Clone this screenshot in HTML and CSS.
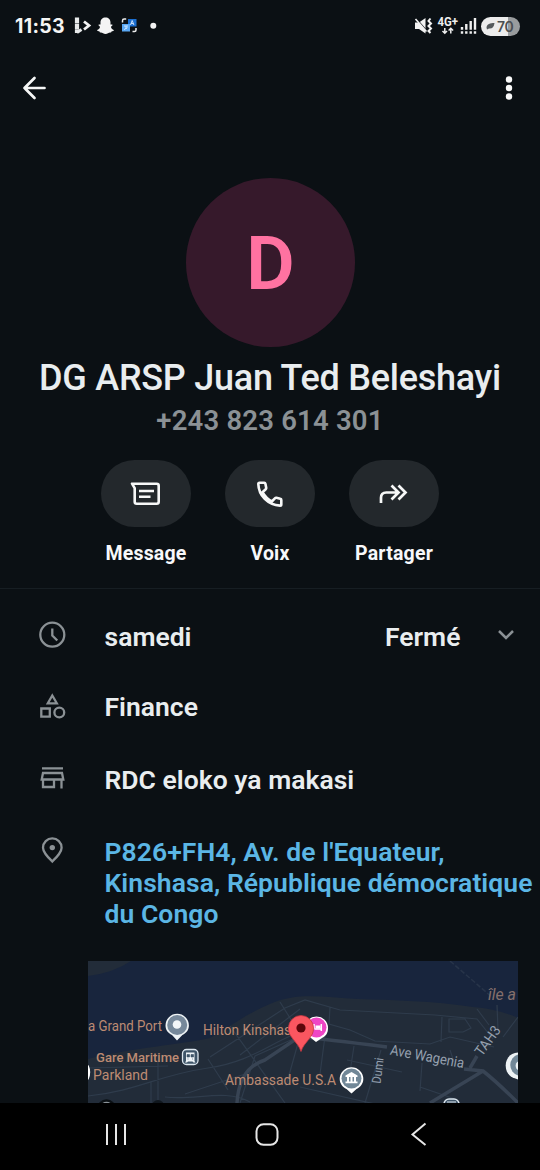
FILE: index.html
```
<!DOCTYPE html>
<html lang="fr">
<head>
<meta charset="utf-8">
<title>Profil professionnel</title>
<link rel="stylesheet" href="styles.css">
</head>
<body>
<div class="screen">
  <header class="status">
    <span class="clock">11:53</span>
    <svg class="status-left" width="84" height="22" viewBox="73 15 84 22">
      <path d="M77 17.500v15.500" stroke="#e8eaeb" stroke-width="4.200" stroke-dasharray="5.500 .4"/>
      <path d="M77 32.500l4.500-3" stroke="#e8eaeb" stroke-width="3"/>
      <path d="M84 21.500l5 4-5 4" fill="none" stroke="#f2f2f2" stroke-width="2.800"/>
      <path d="M105.500 17.500c3 0 5 2 5 5v2c1 0 1.800-.3 2 .4.200.8-1.600 1.200-1.500 2 .3 1.700 1.800 2.600 3 3.100.2.900-1.700 1.200-2.500 1.400-.4.800-.4 1.200-1.300 1.200-1.500-.1-2.700 1.500-4.700 1.500s-3.200-1.600-4.700-1.500c-.9 0-.9-.4-1.300-1.200-.8-.2-2.700-.5-2.500-1.400 1.200-.5 2.700-1.400 3-3.100.1-.8-1.700-1.200-1.500-2 .2-.7 1-.4 2-.4v-2c0-3 2-5 5-5z" fill="#f4f4f4"/>
      <path d="M128 19h8.500v7.500H128z" fill="#1c6fd0"/>
      <path d="M122 24h8v7.500h-8z" fill="#5aa8f4"/>
      <path d="M122.500 22.500v-1.800q0-1.700 1.700-1.700h2M136 28v2q0 1.500-1.500 1.500h-2" fill="none" stroke="#eee" stroke-width="1.500"/>
      <path d="M130.500 25l1.700-4.500 1.700 4.500m-2.800-1.500h2.200M124 26h4m-2 0v3m-2 .6l3.500-2" fill="none" stroke="#d9ebff" stroke-width=".9"/>
      <circle cx="153.300" cy="25.700" r="3" fill="#f3f3f3"/>
    </svg>
    <svg class="status-right" width="64" height="22" viewBox="414 15 64 22">
      <path d="M415 22.500h4l6.500-4.500v15.500l-6.500-4.500h-4z" fill="#f2f2f2"/>
      <path d="M416.500 19l9.500 11" stroke="#0b1014" stroke-width="1.200"/>
      <path d="M415.500 19l11 12.500" stroke="#f2f2f2" stroke-width="1.600"/>
      <path d="M430.500 18.500l-2 2.500 2.500 2.500-2.500 2.500 2.500 2.500-2.500 2.500 2 2" fill="none" stroke="#f2f2f2" stroke-width="2"/>
      <text class="net" x="437.500" y="25.500" textLength="20.500" lengthAdjust="spacingAndGlyphs">4G+</text>
      <path d="M444.800 28v5M442.500 31l2.300 2.300L447 31M450.800 33.500v-5M448.600 30.500l2.200-2.200 2.300 2.200" fill="none" stroke="#eee" stroke-width="1.500"/>
      <path d="M462 27v2.700M466.300 24v5.700M470.700 21v8.700M475 18v11.700M462 31.200v2.600M466.300 31.200v2.600M470.700 31.200v2.600M475 31.200v2.600" stroke="#f0f0f0" stroke-width="2.400"/>
    </svg>
    <div class="battery">
      <svg width="9" height="8" viewBox="0 0 9 8"><path d="M.5 5.500C1 2 4 1 8.500 1 8 5 6 7 3 6.500L1 7.500z" fill="#555a5d"/></svg>
      <span>70</span>
    </div>
  </header>

  <nav class="toolbar">
    <svg width="24" height="24" viewBox="22 76 24 24"><path d="M44.500 88H24.500M34.500 78l-10 10 10 10" fill="none" stroke="#f5f6f6" stroke-width="2.700" stroke-linecap="round" stroke-linejoin="round"/></svg>
    <svg width="8" height="26" viewBox="505 75 8 26" fill="#fafafa"><circle cx="509" cy="79.500" r="3.200"/><circle cx="509" cy="88" r="3.200"/><circle cx="509" cy="96.500" r="3.200"/></svg>
  </nav>

  <section class="profile">
    <div class="avatar"><span>D</span></div>
    <h1 class="name">DG ARSP Juan Ted Beleshayi</h1>
    <p class="phone">+243 823 614 301</p>
    <div class="actions">
      <div class="action">
        <div class="pill">
          <svg width="90" height="67" viewBox="101 460 90 67" fill="none" stroke="#f7f8f8" stroke-width="2.600" stroke-linejoin="round"><path d="M132 483.700h24.700q2 0 2 2v16q0 2-2 2h-20q-2 0-2-2v-13.500z"/><path d="M139 491h15M139 496.700h11.500"/></svg>
        </div>
        <span class="label">Message</span>
      </div>
      <div class="action">
        <div class="pill">
          <svg width="90" height="67" viewBox="225 460 90 67" fill="none" stroke="#f7f8f8" stroke-width="2.600" stroke-linejoin="round"><path d="M259.500 482.700h4.700q1 0 1.200 1l.8 4q.2.900-.5 1.500l-3.200 3q3.500 6.200 9.300 9.300l3.100-3.200q.7-.7 1.500-.5l3.900.9q1 .2 1 1.200v4.500q0 1.200-1.200 1.200c-12.300-.6-21.400-10-21.800-21.700 0-1.200.4-1.200 1.200-1.200z"/></svg>
        </div>
        <span class="label">Voix</span>
      </div>
      <div class="action">
        <div class="pill">
          <svg width="90" height="67" viewBox="349 460 90 67" fill="none" stroke="#f7f8f8" stroke-width="2.700"><path d="M381 503v-5.200q0-5.300 5.300-5.300H399M391.500 485.500l7 7-7 7M398.500 485.500l7 7-7 7"/></svg>
        </div>
        <span class="label">Partager</span>
      </div>
    </div>
  </section>

  <section class="details">
    <div class="row">
      <svg class="icon" width="32" height="32" viewBox="36 619 32 32"><circle cx="52.300" cy="634.700" r="12"/><path d="M52.300 628.500v7l5 5"/></svg>
      <span class="value day">samedi</span>
      <span class="value closed">Fermé</span>
      <svg class="chevron" width="20" height="16" viewBox="496 627 20 16"><path d="M499 631l7 7 7-7"/></svg>
    </div>
    <div class="row">
      <svg class="icon" width="32" height="32" viewBox="36 691 32 32"><path d="M52.300 695.500l4.500 7.800h-9zM41.300 708.500h8.500v8.200h-8.500z"/><circle cx="59.300" cy="712.500" r="4.900"/></svg>
      <span class="value finance">Finance</span>
    </div>
    <div class="row">
      <svg class="icon" width="32" height="32" viewBox="36 763 32 32"><path d="M42 768.300h21M43 773h19l1.300 6.500h-21.600zM43 779.500v7.500h11v-7.500M61.500 779.500v9"/></svg>
      <span class="value motto">RDC eloko ya makasi</span>
    </div>
    <div class="row address-row">
      <svg class="icon" width="32" height="32" viewBox="36 835 32 32"><path d="M52.300 861.500c-5-5-9.300-9.200-9.300-13.800a9.300 9.300 0 0 1 18.600 0c0 4.600-4.300 8.800-9.300 13.800z"/><circle class="dot" cx="52.300" cy="847.600" r="2.700"/></svg>
      <a class="value address">P826+FH4, Av. de l'Equateur,<br>Kinshasa, République démocratique<br>du Congo</a>
    </div>
    <svg class="map" width="430" height="142" viewBox="88 961 430 142">
      <path d="M88 961h430v142H88z" fill="#222c39"/>
      <path d="M88 976q25-3 43-15h387v57q-20-9-45-11c-40-6-80-7-115-8-35-2-62-7-88 5-28 12-38 22-60 34-30 7-75 9-122 21z" fill="#18253d"/>
      <path d="M450 961l43 37" stroke="#273449" stroke-width="1.500" stroke-dasharray="5 2"/>
      <g class="roads">
        <path d="M88 1096c50-5 70-21 120-28s70-33 105-39M165 1097c30 4 60-9 85 5M208 1059l20 31M230 1026l55 77M88 1068l80-2M158 1061v42M151 1081v22M210 1057l75-49 20-8 35 10 95 5 42 4 16 20M280 1002l25 40M240 1055l60-46M240 1103l15-47 45-20M300 1036l-14 50M330 1007l-1 17 21 6 25 11 55 3 20-7 44 10M325 1036l-5 38M354 1046l-4 26M381 1050l-16 53M347 1060l55 12M442 1017l-1 25M449 1019h16l6 9-8 4h-14zM477 1009l12 16M497 1005l1 25M503 1037l15-20M420 1087l35 12M422 1063l-2 28M450 1050l4 12M300 1087l75 17M185 1094l60-20"/>
        <path class="wide" d="M237 1103q2-35 28-43l34-23q25 2 88 10M464 1069l19 2q14 11 35 32M483 1071l-53 32M470 1068l7-12"/>
      </g>
      <g class="places">
        <text x="88" y="1031" textLength="74" lengthAdjust="spacingAndGlyphs">a Grand Port</text>
        <text x="203" y="1034.500" textLength="88" lengthAdjust="spacingAndGlyphs">Hilton Kinshas</text>
        <text class="bold" x="96" y="1061.500" textLength="83" lengthAdjust="spacingAndGlyphs">Gare Maritime</text>
        <text x="93" y="1080" textLength="55" lengthAdjust="spacingAndGlyphs">Parkland</text>
        <text x="225" y="1085" textLength="111" lengthAdjust="spacingAndGlyphs">Ambassade U.S.A</text>
        <text class="island" x="488" y="999.500" textLength="28" lengthAdjust="spacingAndGlyphs">île a</text>
      </g>
      <g class="streets">
        <text transform="translate(389.500 1054.500) rotate(10.500)" textLength="75" lengthAdjust="spacingAndGlyphs">Ave Wagenia</text>
        <text class="small" transform="translate(380.500 1084) rotate(-83)" textLength="26" lengthAdjust="spacingAndGlyphs">Dumi</text>
        <text transform="translate(482 1057) rotate(-54)" textLength="33" lengthAdjust="spacingAndGlyphs">TAH3</text>
      </g>
      <path d="M177 1040.500l-5-5.500c-4-2-6.500-5-6.500-9.500a11.700 11.700 0 0 1 23.400 0c0 4.500-2.500 7.500-6.500 9.500z" fill="#eef3f5"/>
      <circle cx="177.200" cy="1025" r="10" fill="#76889a"/><circle cx="177" cy="1024.500" r="4.300" fill="#f3f6f8"/>
      <rect x="182.500" y="1049.500" width="15.500" height="15" rx="4" fill="#3e5468" stroke="#dce6ee" stroke-width="1.300"/>
      <path d="M186 1052.500h8.500v8.500l1 1.500h-2l-1-1h-4.500l-1 1h-2l1-1.500z" fill="#edf3f7"/><path d="M187 1054.500h2.500v2.500H187zM191 1054.500h2.500v2.500H191zM187.500 1059h1M192 1059h1" fill="#3e5468" stroke="#3e5468" stroke-width=".6"/>
      <path d="M316 1042l-5-4c-4-2-6-5-6-10a11.500 11.500 0 0 1 23 0c0 5-2 8-6 10z" fill="#fff"/>
      <circle cx="316.500" cy="1027.500" r="10" fill="#ef45c5"/><path d="M314 1029.500v-5.500M315 1029h7M321.300 1031v-7" stroke="#fff" stroke-width="1.500"/><path d="M315.500 1025.500h5v3h-5z" fill="#fff"/>
      <path d="M301 1051.500c-1.500-5-4.500-8-8-12.500-3-4-4.500-6-4.500-11a12.500 12.500 0 0 1 25 0c0 5-1.500 7-4.500 11-3.500 4.500-6.500 7.500-8 12.500z" fill="#fa5660" stroke="#c93841" stroke-width=".8"/><circle cx="301" cy="1028" r="4.600" fill="#5e060b"/>
      <path d="M351.500 1093.500l-5-4.500c-4-2-6.800-5.500-6.800-10a11.800 11.800 0 0 1 23.600 0c0 4.500-2.800 8-6.800 10z" fill="#fff"/>
      <circle cx="351.500" cy="1078.500" r="10" fill="#718797"/><path d="M351.500 1072l6 3.500v1.500h-12v-1.500zM347 1077h2v5h-2zM350.500 1077h2v5h-2zM354 1077h2v5h-2zM345.500 1081.500h12v1.700h-12z" fill="#fff"/>
      <path d="M518 1079.500l-4-1.500c-5-2-8.300-6-8.300-12.500 0-7 5-13 12.300-13z" fill="#eef3f5"/><path d="M518 1054.500a11 11 0 0 0 0 21z" fill="#718797"/><path d="M518 1061.500a5 5 0 0 0 0 8.500z" fill="#eef3f5"/>
      <path d="M88 1065.500q3 7-.2 14" fill="#fff" stroke="#fff" stroke-width="1.500"/>
      <circle cx="106.500" cy="1108.500" r="8" fill="#8b9399" stroke="#0b1014" stroke-width="2.500"/><circle cx="158" cy="1106" r="6" fill="#10171e"/>
      <rect x="444" y="1099" width="15" height="15" rx="5" fill="#3e5468" stroke="#dce6ee" stroke-width="1.500"/><path d="M447 1102h9" stroke="#dce6ee"/>
    </svg>
  </section>

  <footer class="navbar">
    <svg width="540" height="67" viewBox="0 1103 540 67" fill="none" stroke="#e6e6e6" stroke-width="2"><path d="M107 1124v21M116 1124v21M125 1124v21"/><rect x="256.500" y="1124.300" width="21" height="20.500" rx="7"/><path d="M425.500 1123.500L412.500 1134.500l13 10.500"/></svg>
  </footer>
</div>
</body>
</html>
```
FILE: styles.css
```
* { box-sizing: border-box; }
body { margin: 0; background: #0b1014; }
svg { display: block; flex: none; }
.screen { width: 540px; height: 1170px; overflow: hidden; display: flex; flex-direction: column; background: #0b1014; color: #e9edef; font-family: Roboto, "Liberation Sans", sans-serif; }
.status { height: 52px; padding: 0 20px 0 15px; display: flex; align-items: center; }
.clock { width: 58px; font: 700 19.500px/22px Inter, sans-serif; letter-spacing: .3px; color: #f5f5f5; }
.status-right { margin-left: auto; }
.net { font: 700 12px Roboto, sans-serif; fill: #eee; }
.battery { width: 39px; height: 19px; margin-left: 3px; border-radius: 10px; display: flex; align-items: center; gap: 2px; padding-left: 5px; background: linear-gradient(90deg, #ececec 70%, #999c9e 70%); color: #4b4f52; font: 600 14px/19px Inter, sans-serif; letter-spacing: -.4px; }
.toolbar { height: 72px; padding: 0 27px 0 22px; display: flex; justify-content: space-between; align-items: center; }
.profile { height: 465px; padding-top: 54px; display: flex; flex-direction: column; align-items: center; border-bottom: 1px solid #171e23; }
.avatar { width: 169px; height: 169px; border-radius: 50%; background: #36192b; color: #ff72a1; display: flex; align-items: center; justify-content: center; font-size: 75px; font-weight: 600; line-height: 80px; letter-spacing: -1px; }
.name { margin: 9px 0 0; height: 44px; font-size: 36px; line-height: 44px; font-weight: 500; letter-spacing: -.26px; white-space: nowrap; }
.phone { margin: 4px 0 0; height: 32px; font-size: 27.500px; line-height: 33px; font-weight: 600; letter-spacing: .2px; color: #8b9195; white-space: nowrap; }
.actions { display: flex; gap: 34px; margin-top: 24px; }
.action { width: 90px; display: flex; flex-direction: column; align-items: center; }
.pill { width: 90px; height: 67px; border-radius: 34px; background: #23282c; }
.label { margin-top: 15px; font-size: 19.500px; line-height: 24px; font-weight: 700; letter-spacing: .2px; color: #f7f8fa; }
.details { height: 514px; padding-top: 10px; }
.row { height: 72px; padding-left: 36px; display: flex; align-items: flex-start; }
.icon { margin-top: 20px; fill: none; stroke: #8b9195; stroke-width: 2.300; }
.dot { fill: #8b9195; stroke: none; }
.value { margin: 22px 0 0 36.500px; font-size: 26.500px; line-height: 31px; font-weight: 650; letter-spacing: .01px; white-space: nowrap; }
.day { width: 200px; }
.closed { width: 111px; margin-left: 80.500px; }
.finance { margin-top: 20px; }
.motto { margin-top: 21px; }
.chevron { margin-top: 28px; fill: none; stroke: #8b9195; stroke-width: 2.500; }
.address-row { height: 146px; }
.address { color: #5bb6e5; margin-top: 21px; letter-spacing: .06px; }
.map { margin: 0 0 0 88px; }
.roads path { fill: none; stroke: #2f3c4c; stroke-width: 1.200; }
.roads .wide { stroke: #384454; stroke-width: 3.500; }
.places text { font: 400 14.500px Roboto, sans-serif; fill: #bd8b73; }
.places .bold { font-weight: 500; font-size: 13.500px; }
.places .island { font-size: 16px; font-style: italic; fill: #86706c; }
.streets text { font: 400 14.500px Roboto, sans-serif; fill: #95a0af; }
.streets .small { font-size: 12.500px; }
.navbar { height: 67px; background: #000; }
```
